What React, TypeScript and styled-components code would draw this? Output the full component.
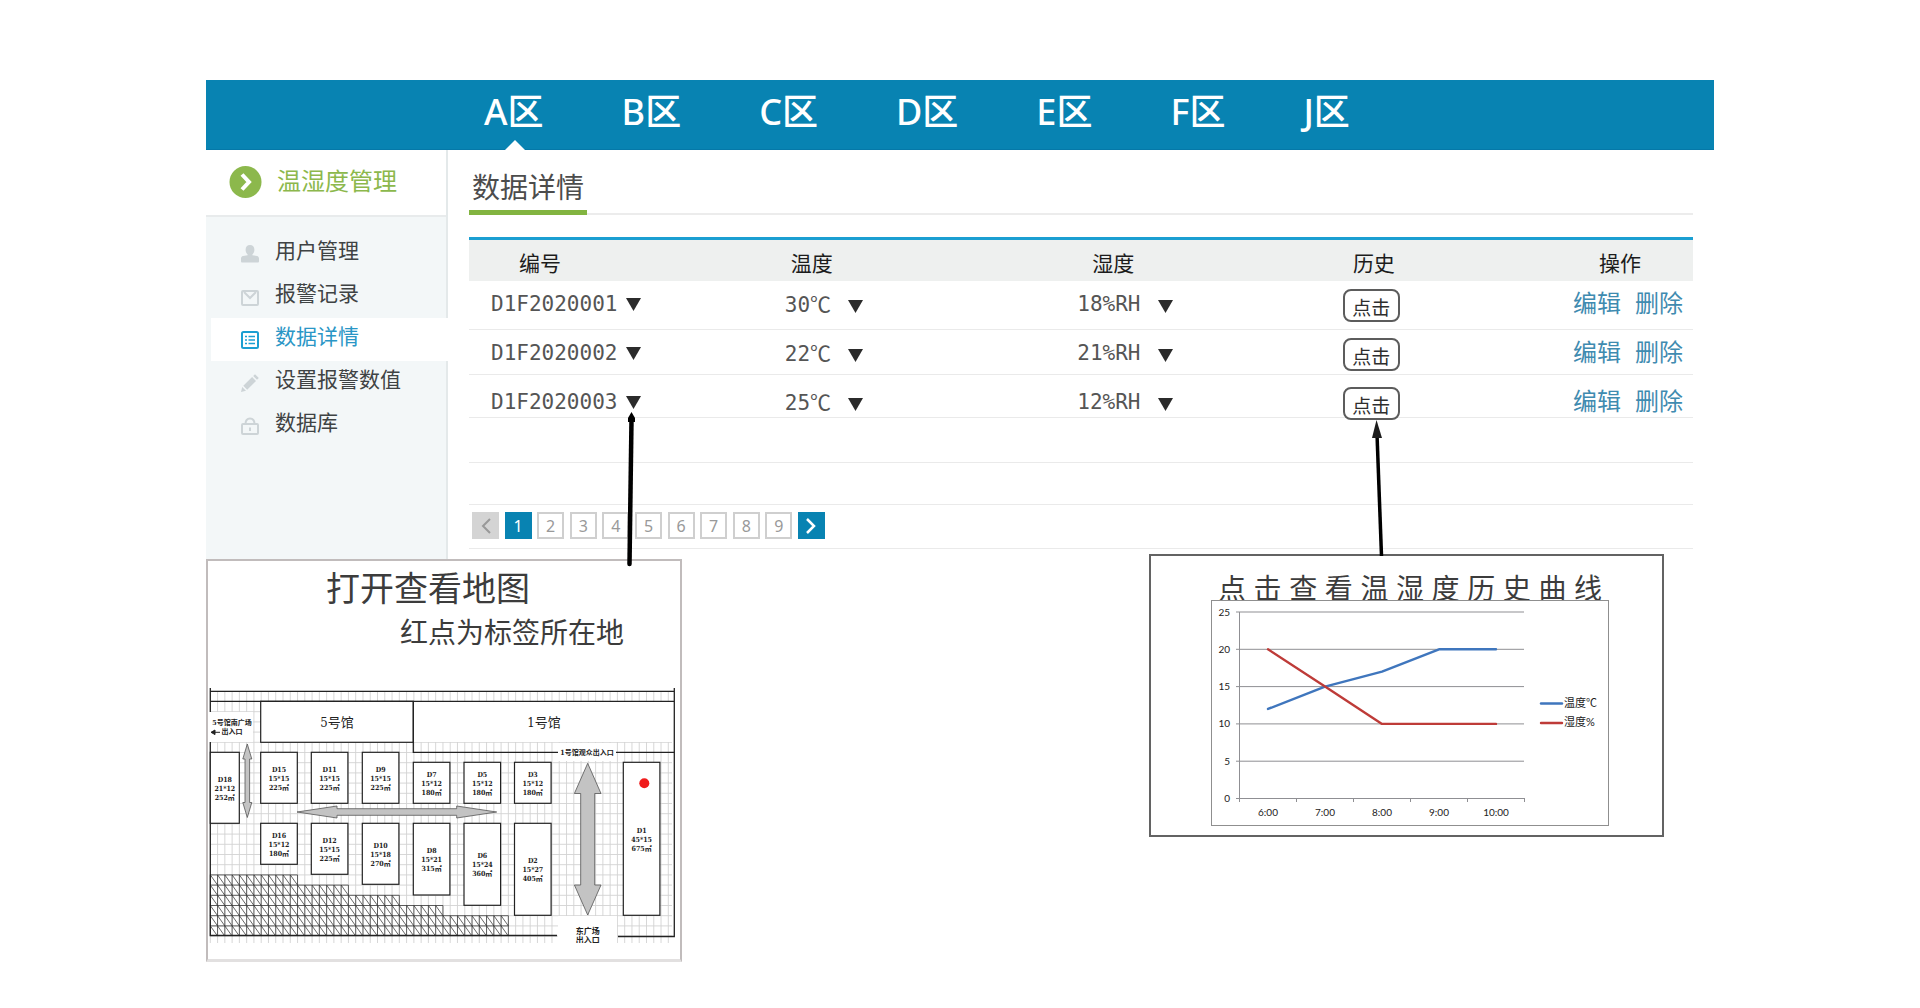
import React from "react";
import styled, { createGlobalStyle } from "styled-components";

const SANS = '"Noto Sans", "Noto Sans CJK SC", sans-serif';
const CJK = '"Noto Sans CJK SC", sans-serif';
const MONO = '"DejaVu Sans Mono", "Noto Sans CJK SC", monospace';
const PLAN = '"DejaVu Serif Condensed", "DejaVu Sans Mono", "Noto Sans CJK SC", serif';

const GlobalStyle = createGlobalStyle`
  *, *::before, *::after { box-sizing: border-box; }
  body { margin: 0; background: #fff; color: #444; font-family: ${SANS}; }
  button { font: inherit; color: inherit; background: none; border: 0; padding: 0; margin: 0; cursor: pointer; }
  a { text-decoration: none; color: inherit; }
  h1, h2, h3, p, ul { margin: 0; padding: 0; font-weight: 400; list-style: none; }
`;

const Page = styled.div`
  padding: 80px 206px 46px;
`;

const TopBar = styled.nav`
  display: flex;
  gap: 78px;
  height: 70px;
  padding-left: 278px;
  background: #0883b2;
  border-bottom: 1px solid #0578a8;
`;

const Zone = styled.a<{ $active?: boolean }>`
  display: flex;
  position: relative;
  padding-top: 8px;
  color: #fff;
  font-size: 36px;
  line-height: 48px;
  font-weight: 500;

  &::after {
    content: "";
    display: ${(p) => (p.$active ? "block" : "none")};
    position: absolute;
    left: 50%;
    bottom: -1px;
    margin-left: -9px;
    border: 10px solid transparent;
    border-top: 0;
    border-bottom-color: #fff;
  }
`;

const Main = styled.div`
  display: grid;
  grid-template-columns: 242px minmax(0, 1fr);
`;

const Sidebar = styled.aside`
  background: #f3f7f8;
  border-right: 2px solid #e4e9ea;
`;

const SideTitle = styled.h1`
  display: flex;
  align-items: center;
  gap: 15px;
  height: 67px;
  padding: 0 0 2px 23px;
  background: #fff;
  border-bottom: 2px solid #e8ebec;
  color: #8cb84c;
  font-family: ${CJK};
  font-size: 24px;
  line-height: 32px;
`;

const SideTitleText = styled.span`
  padding-bottom: 4px;
`;

const Menu = styled.ul`
  padding: 15px 0 0 5px;
`;

const MenuItem = styled.li<{ $active?: boolean }>`
  margin-right: -2px;
  background: ${(p) => (p.$active ? "#fff" : "transparent")};
  color: ${(p) => (p.$active ? "#2a96c6" : "#3f4344")};
`;

const MenuLink = styled.a`
  display: flex;
  align-items: center;
  gap: 16px;
  height: 43px;
  padding-left: 30px;
  font-family: ${CJK};
  font-size: 21px;
  line-height: 28px;
`;

const MenuLabel = styled.span`
  padding-bottom: 10px;
`;

const Content = styled.main`
  padding: 0 21px 10px;
`;

const Heading = styled.div`
  display: flex;
  height: 65px;
  border-bottom: 2px solid #ececec;
`;

const Title = styled.h2`
  height: 65px;
  padding: 16px 3px 0 3px;
  border-bottom: 5px solid #82b440;
  color: #4c4c4c;
  font-family: ${CJK};
  font-size: 28px;
  line-height: 40px;
`;

const Table = styled.table`
  width: 100%;
  margin-top: 22px;
  border-spacing: 0;
  table-layout: fixed;
`;

const Col = styled.col<{ $share: number }>`
  width: ${(p) => p.$share}%;
`;

const Th = styled.th<{ $indent: number }>`
  height: 44px;
  padding: 3px 0 0 ${(p) => p.$indent}px;
  border-top: 3px solid #1b9fd2;
  background: #eef0ef;
  color: #1c1c1c;
  font-family: ${CJK};
  font-size: 21px;
  line-height: 28px;
  font-weight: 400;
  text-align: left;
`;

const Row = styled.tr<{ $height: number; $top: number }>`
  height: ${(p) => p.$height}px;

  td {
    padding: ${(p) => p.$top}px 0 0 22px;
    border-bottom: 1px solid #eaeaea;
    vertical-align: top;
    white-space: nowrap;
  }
`;

const CellLine = styled.div<{ $gap?: number }>`
  display: flex;
  align-items: center;
  gap: ${(p) => p.$gap || 0}px;
  height: 24px;
`;

const Value = styled.button<{ $gap: number }>`
  display: flex;
  align-items: center;
  gap: ${(p) => p.$gap}px;
  color: #555;
  font-family: ${MONO};
  font-size: 21px;
  line-height: 24px;
`;

const Unit = styled.span`
  font-family: ${CJK};
`;

const CaretDown = styled.svg<{ $low?: boolean }>`
  display: block;
  margin-top: ${(p) => (p.$low ? 4 : 0)}px;
`;

const HistoryButton = styled.button`
  flex: none;
  width: 57px;
  height: 33px;
  margin-top: 3px;
  padding-top: 3px;
  border: 2px solid #5c5c5c;
  border-radius: 8px;
  background: #fff;
  color: #2e2e2e;
  font-family: ${CJK};
  font-size: 19px;
  line-height: 24px;
`;

const Action = styled.a`
  padding-bottom: 4px;
  color: #3f8bb0;
  font-family: ${CJK};
  font-size: 24px;
  line-height: 24px;
`;

const Pagination = styled.nav`
  height: 44px;
  padding: 7px 0 0 3px;
  border-bottom: 1px solid #eaeaea;
`;

const Pages = styled.div`
  display: flex;
  justify-content: space-between;
  width: 353px;
`;

const PageButton = styled.button<{ $kind?: "on" | "off" }>`
  display: flex;
  align-items: center;
  justify-content: center;
  width: 27px;
  height: 27px;
  border: 2px solid ${(p) => (p.$kind === "on" ? "#0883b2" : p.$kind === "off" ? "#d4d4d4" : "#cfcfcf")};
  background: ${(p) => (p.$kind === "on" ? "#0883b2" : p.$kind === "off" ? "#d4d4d4" : "#fff")};
  color: ${(p) => (p.$kind === "on" ? "#fff" : "#999")};
  font-family: ${SANS};
  font-size: 16px;
  line-height: 20px;
`;

const Notes = styled.div`
  display: flex;
  justify-content: space-between;
  align-items: flex-start;
  margin-top: -5px;
  padding-right: 50px;
`;

const MapCard = styled.section`
  position: relative;
  width: 476px;
  margin-top: 5px;
  padding: 8px 0 16px;
  border: 2px solid #c1bcbc;
  border-bottom: 3px solid #e2e0e0;
  background: #fff;
  color: #3c3c3c;
  font-family: ${CJK};
`;

const MapTitle = styled.h3`
  padding-left: 118px;
  font-size: 34px;
  line-height: 36px;
`;

const MapHint = styled.p`
  margin-top: 10px;
  padding-left: 192px;
  font-size: 28px;
  line-height: 32px;
`;

const MapDrawing = styled.svg`
  display: block;
  width: 100%;
  margin-top: 33px;
  font-family: ${PLAN};
`;

const HistoryCard = styled.section`
  position: relative;
  width: 515px;
  padding: 13px 53px 9px 60px;
  border: 2px solid #636363;
  background: #fff;
`;

const HistoryTitle = styled.h3`
  padding: 0 7px;
  color: #3c3c3c;
  font-family: ${CJK};
  font-size: 28px;
  line-height: 36px;
  text-align: justify;
  text-align-last: justify;
`;

const Chart = styled.svg`
  display: block;
  position: relative;
  width: 100%;
  margin-top: -5px;
  background: #fff;
  font-family: Lato, "Noto Sans CJK SC", sans-serif;
`;

const MapPointer = styled.svg`
  position: absolute;
  left: 416px;
  bottom: calc(100% - 6px);
  pointer-events: none;
`;

const HistoryPointer = styled.svg`
  position: absolute;
  left: 218px;
  bottom: 100%;
  pointer-events: none;
`;

/* ---------- icons ---------- */

const ChevronBadge = () => (
  <svg width="33" height="32" viewBox="0 0 33 32" aria-hidden="true">
    <circle cx="16.500" cy="16" r="16" fill="#8cb84c" />
    <path d="M13 8.500l7 7.500-7 7.500" fill="none" stroke="#fff" strokeWidth="4" />
  </svg>
);

type IconName = "user" | "mail" | "list" | "pencil" | "lock";

const MenuIcon = ({ name }: { name: IconName }) => (
  <svg width="18" height="18" viewBox="0 0 18 18" fill="none" stroke="#cdd4d7" strokeWidth="2" aria-hidden="true">
    {name === "user" && (
      <path
        d="M9 0c2.800 0 4.400 2 4.400 4.800 0 2-.8 3.700-2 4.600v.8l4.600.8c1.300.300 2 1.300 2 2.600v2.600c0 .8-.5 1.300-1.300 1.300H1.300C.5 17.500 0 17 0 16.200v-2.600c0-1.300.7-2.300 2-2.600l4.600-.8v-.8c-1.200-.9-2-2.600-2-4.600C4.600 2 6.200 0 9 0z"
        fill="#cdd4d7"
        stroke="none"
      />
    )}
    {name === "mail" && (
      <>
        <rect x="1" y="3" width="16" height="14" rx="1" />
        <path d="M3 4l6 6 6-6" />
      </>
    )}
    {name === "list" && (
      <g stroke="#1b9fd2">
        <rect x="1" y="1" width="16" height="16" rx="1.500" />
        <path d="M4 5.500h2M7.500 5.500h6.500M4 9h2M7.500 9h6.500M4 12.500h2M7.500 12.500h6.500" strokeWidth="1.700" />
      </g>
    )}
    {name === "pencil" && (
      <path d="M0 18l1.200-5 3.800 3.800zM2.300 11.800l8.800-8.800 3.900 3.900-8.800 8.800zM12.200 2L14 .2l3.800 3.800L16 5.800z" fill="#cdd4d7" stroke="none" />
    )}
    {name === "lock" && (
      <>
        <rect x="1" y="7" width="16" height="10" rx="1" />
        <path d="M4.500 7c0-3.400 1.700-5.500 4.500-5.500s4.500 2.100 4.500 5.500M9 10.500v3.500" />
      </>
    )}
  </svg>
);

const Caret = ({ low }: { low?: boolean }) => (
  <CaretDown $low={low} width="15" height="13" viewBox="0 0 15 13" aria-hidden="true">
    <path d="M0 0h15L7.500 13z" fill="#2b2b2b" />
  </CaretDown>
);

const PageArrow = ({ next }: { next?: boolean }) => (
  <svg width="12" height="18" viewBox="0 0 12 18" fill="none" stroke="currentColor" strokeWidth={next ? 2.5 : 2} aria-hidden="true">
    <path d={next ? "M2 2l7 7-7 7" : "M10 2L3 9l7 7"} />
  </svg>
);

/* ---------- data ---------- */

const zones = ["A区", "B区", "C区", "D区", "E区", "F区", "J区"];

const menu: { label: string; icon: IconName }[] = [
  { label: "用户管理", icon: "user" },
  { label: "报警记录", icon: "mail" },
  { label: "数据详情", icon: "list" },
  { label: "设置报警数值", icon: "pencil" },
  { label: "数据库", icon: "lock" },
];

const columns = [
  { label: "编号", share: 24, indent: 50 },
  { label: "温度", share: 23.9, indent: 28 },
  { label: "湿度", share: 21.7, indent: 37 },
  { label: "历史", share: 18.8, indent: 32 },
  { label: "操作", share: 11.6, indent: 48 },
];

const rows = [
  { id: "D1F2020001", temp: "30", hum: "18%RH", height: 49, top: 11 },
  { id: "D1F2020002", temp: "22", hum: "21%RH", height: 45, top: 11 },
  { id: "D1F2020003", temp: "25", hum: "12%RH", height: 43, top: 15 },
];

const emptyRows = [45, 42];

/* booth name, size, area, left, top, bottom (all booths share a width) */
type BoothData = [string, string, string, number, number, number];

const booths: BoothData[] = [
  ["D15", "15*15", "225㎡", 54.7, 72.3, 123.3],
  ["D11", "15*15", "225㎡", 105.3, 72.3, 123.3],
  ["D9", "15*15", "225㎡", 156.3, 72.3, 123.3],
  ["D7", "15*12", "180㎡", 207.3, 82.3, 123.3],
  ["D5", "15*12", "180㎡", 258, 82.3, 123.3],
  ["D3", "15*12", "180㎡", 308.5, 82.3, 123.3],
  ["D16", "15*12", "180㎡", 54.7, 143.3, 184.3],
  ["D12", "15*15", "225㎡", 105.3, 143.3, 194.3],
  ["D10", "15*18", "270㎡", 156.3, 143.3, 204.3],
  ["D8", "15*21", "315㎡", 207.3, 143.3, 215],
  ["D6", "15*24", "360㎡", 258, 143.3, 225.3],
  ["D2", "15*27", "405㎡", 308.5, 143.3, 235.3],
  ["D1", "45*15", "675㎡", 417.3, 82.3, 235.3],
];

const Booth = ({ b, width = 36.6 }: { b: BoothData; width?: number }) => {
  const [name, size, area, x, top, bottom] = b;
  const cx = x + width / 2;
  const cy = (top + bottom) / 2 + 3;
  return (
    <g>
      <rect x={x} y={top} width={width} height={bottom - top} fill="#fff" stroke="#222" strokeWidth="1.200" />
      <g fontSize="7" fontWeight="700" fill="#222" textAnchor="middle">
        <text x={cx} y={cy - 9}>{name}</text>
        <text x={cx} y={cy}>{size}</text>
        <text x={cx} y={cy + 9}>{area}</text>
      </g>
    </g>
  );
};

const CELL_W = 7.27;
const CELL_H = 10.2;
const GRID_X = 4.3;
const GRID_Y = 11.3;

const gridLines = [
  ...Array.from({ length: 64 }, (_, i) => `M${GRID_X + i * CELL_W} ${GRID_Y}V263`),
  ...Array.from({ length: 25 }, (_, i) => `M${GRID_X} ${GRID_Y + i * CELL_H}H466`),
].join("");

/* terraced area: each step is one row of cells */
const hatchCells = [12, 19, 26, 32, 41, 41];
const hatchTop = GRID_Y + 18 * CELL_H;
const hatchLines = hatchCells
  .map((count, row) => {
    const y = hatchTop + row * CELL_H;
    const cells = Array.from({ length: count }, (_, i) => {
      const x = GRID_X + i * CELL_W;
      return `M${x} ${y + CELL_H}V${y}L${x + CELL_W} ${y + CELL_H}`;
    }).join("");
    return `${cells}M${GRID_X} ${y}H${GRID_X + count * CELL_W}V${y + CELL_H}`;
  })
  .join("");

const FloorPlan = () => (
  <MapDrawing viewBox="2 0 472 263" role="img" aria-label="展馆地图">
    <path d={gridLines} stroke="#d2d2d2" strokeWidth="0.900" fill="none" />
    <path d={hatchLines} stroke="#333" strokeWidth="0.750" fill="none" />
    <rect x="207.300" y="21.300" width="260" height="40.700" fill="#fff" />
    <rect x="54.700" y="21.300" width="152.600" height="41" fill="#fff" stroke="#222" strokeWidth="1.200" />
    <rect x="2" y="32" width="45" height="30" fill="#fff" />
    <rect x="352" y="63" width="58" height="18" fill="#fff" />
    <rect x="352" y="236" width="59" height="27" fill="#fff" />
    <g stroke="#222" strokeWidth="1.300" fill="none">
      <path d="M4.300 8V32M4.300 62V255.500H351M4.300 11.300H468.300M4.300 21.300H468.300M468.300 8V256.500H412" />
      <path d="M207.300 21.300V72.300H352M410 72.300H468.300" />
    </g>
    {booths.map((b) => (
      <Booth key={b[0]} b={b} />
    ))}
    <Booth b={["D18", "21*12", "252㎡", 4.3, 72.3, 143.3]} width={29} />
    <g fill="#c3c3c3" stroke="#555" strokeWidth="0.800">
      <path d="M41.300 64L45.800 79H43.600V122.500H45.800L41.300 137.500L36.800 122.500H39V79H36.800z" />
      <path d="M91 132L131 126V128.700H250.700V126L290.700 132L250.700 138V135.300H131V138z" />
      <path d="M381.700 83.300L395 113.500H388.700V205H395L381.700 235L368.400 205H374.700V113.500H368.400z" />
    </g>
    <circle cx="438.300" cy="103.300" r="5" fill="#f01c1c" />
    <g fill="#222" textAnchor="middle">
      <text x="131" y="47" fontSize="13">5号馆</text>
      <text x="338" y="47" fontSize="13">1号馆</text>
      <g fontWeight="700">
        <text x="26" y="45" fontSize="7">5号馆南广场</text>
        <text x="26" y="53.500" fontSize="7">出入口</text>
        <text x="381" y="75" fontSize="7">1号馆观众出入口</text>
        <text x="381.700" y="254" fontSize="8">东广场</text>
        <text x="381.700" y="262.500" fontSize="8">出入口</text>
      </g>
    </g>
    <path d="M14 52.300H6M9 50L5 52.300L9 54.600z" stroke="#222" fill="#222" strokeWidth="1" />
  </MapDrawing>
);

const hours = ["6:00", "7:00", "8:00", "9:00", "10:00"];
const temps = [12, 15, 17, 20, 20];
const hums = [20, 15, 10, 10, 10];
const px = (i: number) => 57 + i * 57;
const py = (v: number) => 198.5 - v * 7.46;
const line = (values: number[]) => values.map((v, i) => `${px(i)},${py(v)}`).join(" ");

const HistoryChart = () => (
  <Chart viewBox="0 0 398 226" role="img" aria-label="温湿度历史曲线">
    <rect x="0.500" y="0.500" width="397" height="225" fill="#fff" stroke="#8f8f8f" />
    <g stroke="#8f8f93" strokeWidth="1">
      {[0, 5, 10, 15, 20, 25].map((v) => (
        <path key={v} d={`M25 ${py(v)}H313`} />
      ))}
      <path d="M28.500 12V198" />
      {[0, 1, 2, 3, 4, 5].map((i) => (
        <path key={i} d={`M${28.5 + i * 57} 198v4`} />
      ))}
    </g>
    <g fontSize="10" fill="#222">
      {[0, 5, 10, 15, 20, 25].map((v) => (
        <text key={v} x="19" y={py(v) + 3.5} textAnchor="end">{v}</text>
      ))}
      {hours.map((h, i) => (
        <text key={h} x={px(i)} y="216" textAnchor="middle">{h}</text>
      ))}
      <text x="353" y="107" fontSize="11">温度℃</text>
      <text x="353" y="126" fontSize="11">湿度%</text>
    </g>
    <g fill="none" strokeWidth="2.400" strokeLinecap="round" strokeLinejoin="round">
      <polyline points={line(temps)} stroke="#3f76bd" />
      <polyline points={line(hums)} stroke="#be3b38" />
      <path d="M330 103.500H351" stroke="#3f76bd" />
      <path d="M330 123H351" stroke="#be3b38" />
    </g>
  </Chart>
);

export default function App() {
  return (
    <Page>
      <GlobalStyle />
      <TopBar>
        {zones.map((z, i) => (
          <Zone key={z} href="#" $active={i === 0}>{z}</Zone>
        ))}
      </TopBar>
      <Main>
        <Sidebar>
          <SideTitle>
            <ChevronBadge />
            <SideTitleText>温湿度管理</SideTitleText>
          </SideTitle>
          <Menu>
            {menu.map((m) => (
              <MenuItem key={m.label} $active={m.icon === "list"}>
                <MenuLink href="#">
                  <MenuIcon name={m.icon} />
                  <MenuLabel>{m.label}</MenuLabel>
                </MenuLink>
              </MenuItem>
            ))}
          </Menu>
        </Sidebar>
        <Content>
          <Heading>
            <Title>数据详情</Title>
          </Heading>
          <Table>
            <colgroup>
              {columns.map((c) => (
                <Col key={c.label} $share={c.share} />
              ))}
            </colgroup>
            <thead>
              <tr>
                {columns.map((c) => (
                  <Th key={c.label} $indent={c.indent}>{c.label}</Th>
                ))}
              </tr>
            </thead>
            <tbody>
              {rows.map((r) => (
                <Row key={r.id} $height={r.height} $top={r.top}>
                  <td>
                    <CellLine>
                      <Value $gap={9}>{r.id}<Caret /></Value>
                    </CellLine>
                  </td>
                  <td>
                    <CellLine>
                      <Value $gap={17}><span>{r.temp}<Unit>℃</Unit></span><Caret low /></Value>
                    </CellLine>
                  </td>
                  <td>
                    <CellLine>
                      <Value $gap={17}>{r.hum}<Caret low /></Value>
                    </CellLine>
                  </td>
                  <td>
                    <CellLine>
                      <HistoryButton>点击</HistoryButton>
                    </CellLine>
                  </td>
                  <td>
                    <CellLine $gap={14}>
                      <Action href="#">编辑</Action>
                      <Action href="#">删除</Action>
                    </CellLine>
                  </td>
                </Row>
              ))}
              {emptyRows.map((h) => (
                <Row key={h} $height={h} $top={0}>
                  <td colSpan={5} />
                </Row>
              ))}
            </tbody>
          </Table>
          <Pagination aria-label="分页">
            <Pages>
              <PageButton $kind="off" aria-label="上一页"><PageArrow /></PageButton>
              {[1, 2, 3, 4, 5, 6, 7, 8, 9].map((n) => (
                <PageButton key={n} $kind={n === 1 ? "on" : undefined}>{n}</PageButton>
              ))}
              <PageButton $kind="on" aria-label="下一页"><PageArrow next /></PageButton>
            </Pages>
          </Pagination>
        </Content>
      </Main>
      <Notes>
        <MapCard>
          <MapTitle>打开查看地图</MapTitle>
          <MapHint>红点为标签所在地</MapHint>
          <FloorPlan />
          <MapPointer width="16" height="155" viewBox="0 0 16 155" aria-hidden="true">
            <path d="M7.500 8L5.500 152" stroke="#000" strokeWidth="4.500" strokeLinecap="round" />
            <path d="M7.500 0L11 6V10H4V6z" fill="#000" />
          </MapPointer>
        </MapCard>
        <HistoryCard>
          <HistoryTitle>点击查看温湿度历史曲线</HistoryTitle>
          <HistoryChart />
          <HistoryPointer width="20" height="136" viewBox="0 0 20 136" aria-hidden="true">
            <path d="M8 14L12.500 136" stroke="#000" strokeWidth="3.500" />
            <path d="M7.500 0L13 18H3z" fill="#1c1c1c" />
          </HistoryPointer>
        </HistoryCard>
      </Notes>
    </Page>
  );
}
